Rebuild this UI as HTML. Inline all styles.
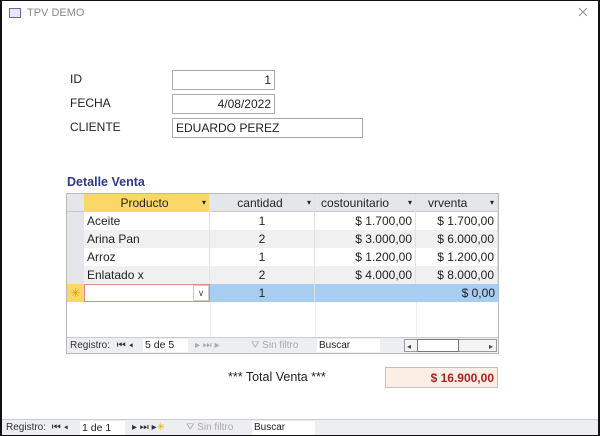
<!DOCTYPE html><html><head><style>
*{margin:0;padding:0;box-sizing:border-box}
body{width:600px;height:436px;overflow:hidden;background:#fff;font-family:"Liberation Sans",sans-serif;font-size:12px;color:#222;position:relative}
.a{position:absolute}
.frame{left:0;top:0;width:600px;height:436px;border:2px solid #111;border-top-width:1px}
.box{border:1px solid #a9a9a9;background:#fff;height:20px;line-height:18px;padding:0 3px}
.g{left:66px;top:193px;width:433px;height:161px;border:1px solid #b8b8b8;background:#fff}
.c{position:absolute;height:18px;line-height:18px;font-size:12px;white-space:nowrap;border-right:1px solid #e2e2e2;padding:0 3px}
.r{text-align:right}.ctr{text-align:center}
.nav{font-size:10px;color:#333}
</style></head><body>
<div class="a frame"></div>
<div class="a" style="left:9px;top:8px;width:12px;height:10px;border:1px solid #6a6a9a;background:#e8e8f4"></div>
<div class="a" style="left:27px;top:7px;font-size:11px;color:#888">TPV DEMO</div>
<svg class="a" style="left:578px;top:7px" width="10" height="10"><path d="M1 1L9 9M9 1L1 9" stroke="#999" stroke-width="1.2"/></svg>
<div class="a" style="left:70px;top:72px">ID</div>
<div class="a" style="left:70px;top:96px">FECHA</div>
<div class="a" style="left:70px;top:120px">CLIENTE</div>
<div class="a box r" style="left:172px;top:70px;width:103px">1</div>
<div class="a box r" style="left:172px;top:94px;width:103px">4/08/2022</div>
<div class="a box" style="left:172px;top:118px;width:191px">EDUARDO PEREZ</div>
<div class="a" style="left:67px;top:175px;font-weight:bold;color:#2f3a84;font-size:12.5px">Detalle Venta</div>
<div class="a g">
 <div class="a" style="left:0;top:0;width:431px;height:18px;background:#e4e6ea;border-bottom:1px solid #c8c8c8"></div>
 <div class="a" style="left:17px;top:0;width:126px;height:18px;background:#fbd76a"></div>
 <div class="c ctr" style="left:17px;top:0;width:126px">Producto <span style="float:right;font-size:8px">▾</span></div>
 <div class="c ctr" style="left:143px;top:0;width:105px">cantidad <span style="float:right;font-size:8px">▾</span></div>
 <div class="c" style="left:248px;top:0;width:101px;padding-left:6px">costounitario <span style="float:right;font-size:8px">▾</span></div>
 <div class="c" style="left:349px;top:0;width:82px;padding-left:12px">vrventa <span style="float:right;font-size:8px">▾</span></div>
 <div class="a" style="left:0;top:18px;width:17px;height:72px;background:#e4e6ea"></div>
 <div class="a" style="left:17px;top:36px;width:414px;height:18px;background:#f0f0f0"></div>
 <div class="a" style="left:17px;top:72px;width:414px;height:18px;background:#f0f0f0"></div>
 <div class="c" style="left:17px;top:18px;width:126px">Aceite</div><div class="c ctr" style="left:143px;top:18px;width:105px">1</div><div class="c r" style="left:248px;top:18px;width:101px">$ 1.700,00</div><div class="c r" style="left:349px;top:18px;width:82px">$ 1.700,00</div>
 <div class="c" style="left:17px;top:36px;width:126px">Arina Pan</div><div class="c ctr" style="left:143px;top:36px;width:105px">2</div><div class="c r" style="left:248px;top:36px;width:101px">$ 3.000,00</div><div class="c r" style="left:349px;top:36px;width:82px">$ 6.000,00</div>
 <div class="c" style="left:17px;top:54px;width:126px">Arroz</div><div class="c ctr" style="left:143px;top:54px;width:105px">1</div><div class="c r" style="left:248px;top:54px;width:101px">$ 1.200,00</div><div class="c r" style="left:349px;top:54px;width:82px">$ 1.200,00</div>
 <div class="c" style="left:17px;top:72px;width:126px">Enlatado x</div><div class="c ctr" style="left:143px;top:72px;width:105px">2</div><div class="c r" style="left:248px;top:72px;width:101px">$ 4.000,00</div><div class="c r" style="left:349px;top:72px;width:82px">$ 8.000,00</div>
 <div class="a" style="left:0;top:90px;width:17px;height:18px;background:#fbd76a;color:#d8a000;text-align:center;line-height:18px">✳</div>
 <div class="a" style="left:143px;top:90px;width:288px;height:18px;background:#a7cdf0"></div>
 <div class="a" style="left:17px;top:90px;width:126px;height:18px;border:1px solid #e08a8a;background:#fff"></div>
 <div class="a" style="left:126px;top:91px;width:16px;height:16px;border:1px solid #ccc;text-align:center;font-size:9px;line-height:15px;color:#555">∨</div>
 <div class="c ctr" style="left:143px;top:90px;width:105px">1</div><div class="c r" style="left:349px;top:90px;width:82px;border:none">$ 0,00</div>
 <div class="a" style="left:143px;top:108px;width:1px;height:36px;background:#eee"></div>
 <div class="a" style="left:248px;top:108px;width:1px;height:36px;background:#eee"></div>
 <div class="a" style="left:349px;top:108px;width:1px;height:36px;background:#eee"></div>
 <div class="a nav" style="left:0;top:143px;width:431px;height:16px;background:#eceef2;border-top:1px solid #ccc;line-height:15px;padding-left:3px">Registro: <span style="margin-left:4px">⏮ ◂</span>
  <span class="a" style="left:76px;top:1px;width:45px;height:13px;background:#fff;line-height:13px;padding-left:2px;font-size:10.5px;color:#222">5 de 5</span>
  <span class="a" style="left:128px;top:0;color:#aaa">▸ ⏭ ▸</span>
  <span class="a" style="left:184px;top:0;color:#aaa">⛛ Sin filtro</span>
  <span class="a" style="left:250px;top:1px;width:63px;height:13px;background:#fff;line-height:13px;padding-left:2px;color:#222">Buscar</span>
  <span class="a" style="left:337px;top:1px;width:93px;height:13px;border:1px solid #999;background:#f4f4f4"></span>
  <span class="a" style="left:340px;top:1px;font-size:8px;color:#444">◂</span>
  <span class="a" style="left:422px;top:1px;font-size:8px;color:#444">▸</span>
  <span class="a" style="left:350px;top:1px;width:42px;height:13px;border:1px solid #777;background:#fff"></span>
 </div>
</div>
<div class="a" style="left:228px;top:370px;font-size:12.5px">*** Total Venta ***</div>
<div class="a r" style="left:385px;top:367px;width:113px;height:21px;line-height:20px;background:#fbeee4;border:1px solid #c8c0b8;color:#b02020;font-weight:bold;padding-right:3px">$ 16.900,00</div>
<div class="a nav" style="left:2px;top:419px;width:596px;height:16px;background:#eceef2;border-top:1px solid #ccc;line-height:15px;padding-left:4px">Registro: <span style="margin-left:3px">⏮ ◂</span>
 <span class="a" style="left:78px;top:1px;width:45px;height:14px;background:#fff;padding-left:2px;font-size:10.5px;color:#222;line-height:14px">1 de 1</span>
 <span class="a" style="left:130px;top:0">▸ ⏭ ▸<span style="color:#e8b000">✳</span></span>
 <span class="a" style="left:184px;top:0;color:#aaa">⛛ Sin filtro</span>
 <span class="a" style="left:250px;top:1px;width:63px;height:14px;background:#fff;padding-left:2px;color:#222;line-height:14px">Buscar</span>
</div>
</body></html>
